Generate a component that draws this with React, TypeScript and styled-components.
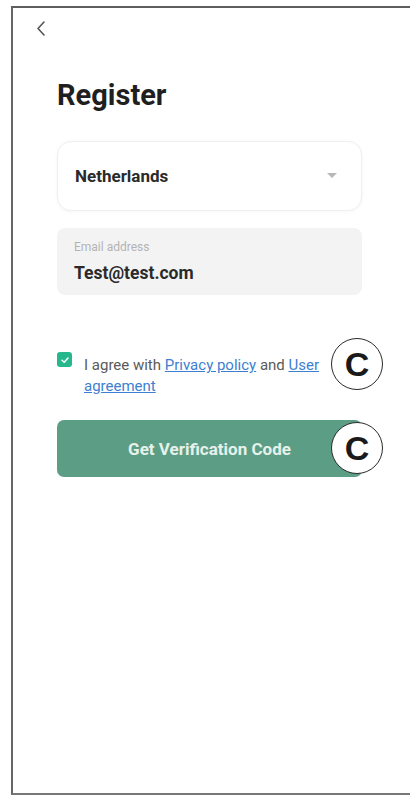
import React from "react"
import styled, { createGlobalStyle } from "styled-components"

const Global = createGlobalStyle`
    html, body {
        margin: 0;
        padding: 0;
        background: #ffffff;
        font-family: Roboto, "Liberation Sans", Arial, sans-serif;
        overflow: hidden;
    }
    * { box-sizing: border-box; }
`

const Frame = styled.div`
    margin: 6px 0 0 11px;
    width: calc(100vw - 11px);
    height: 789px;
    border-top: 2px solid #5e5e5e;
    border-left: 2px solid #666;
    border-bottom: 2px solid #777;
    display: flex;
    flex-direction: column;
`

const TopBar = styled.div`
    height: 40px;
    padding: 12px 0 0 22px;
`

const BackBtn = styled.button`
    background: none;
    border: none;
    padding: 0;
    width: 14px;
    height: 18px;
    cursor: pointer;
    display: flex;
`

const Content = styled.div`
    padding: 0 48px 0 44px;
    display: flex;
    flex-direction: column;
`

const Title = styled.h1`
    margin: 30px 0 0;
    font-size: 29px;
    line-height: 34px;
    font-weight: 700;
    color: #1f1f1f;
`

const SelectCard = styled.div`
    margin-top: 29px;
    height: 70px;
    border-radius: 14px;
    border: 1px solid #efefef;
    box-shadow: 0 1px 4px rgba(0, 0, 0, 0.04);
    background: #fff;
    display: flex;
    align-items: center;
    justify-content: space-between;
    padding: 0 24px 0 17px;

    span {
        font-size: 17px;
        font-weight: 700;
        color: #2a2a2a;
    }
`

const Caret = styled.i`
    width: 0;
    height: 0;
    border-left: 5px solid transparent;
    border-right: 5px solid transparent;
    border-top: 5px solid #b8b8b8;
    margin-top: -2px;
`

const InputBox = styled.div`
    margin-top: 17px;
    height: 67px;
    border-radius: 8px;
    background: #f3f3f3;
    padding: 12px 17px 0;
    display: flex;
    flex-direction: column;

    label {
        font-size: 12px;
        color: #b3b3b3;
        line-height: 14px;
    }

    strong {
        margin-top: 8px;
        font-size: 17.5px;
        font-weight: 700;
        color: #2a2a2a;
        line-height: 22px;
    }
`

const AgreeRow = styled.div`
    position: relative;
    margin-top: 60px;
    display: flex;
    align-items: flex-start;
    gap: 12px;
`

const Check = styled.span`
    flex: none;
    width: 15px;
    height: 15px;
    margin-top: -3px;
    border-radius: 3px;
    background: #26b88c;
    display: flex;
    align-items: center;
    justify-content: center;
`

const AgreeText = styled.p`
    margin: 0;
    width: 250px;
    font-size: 15px;
    line-height: 21px;
    color: #5a5a5a;

    a {
        color: #3d7fd0;
        text-decoration: underline;
    }
`

const Mark = styled.span<{ $top: number }>`
    position: absolute;
    right: -21px;
    top: ${({ $top }) => $top}px;
    width: 52px;
    height: 52px;
    border-radius: 50%;
    border: 1.5px solid #2a2a2a;
    background: #fff;
    display: flex;
    align-items: center;
    justify-content: center;
    font-family: "Liberation Sans", Arial, sans-serif;
    font-size: 34px;
    font-weight: 700;
    color: #1a1a1a;
    line-height: 1;
`

const ButtonRow = styled.div`
    position: relative;
    margin-top: 23px;
`

const SubmitBtn = styled.button`
    width: 100%;
    height: 57px;
    border: none;
    border-radius: 7px;
    background: #5c9e85;
    color: #e6f1eb;
    font-family: Roboto, "Liberation Sans", Arial, sans-serif;
    font-size: 17px;
    font-weight: 700;
    cursor: pointer;
`

export default function App() {
    return (
        <>
            <Global />
            <Frame>
                <TopBar>
                    <BackBtn aria-label="Back">
                        <svg width="12" height="17" viewBox="0 0 12 17">
                            <path d="M9 2 L3 8.5 L9 15" fill="none" stroke="#555" strokeWidth="1.6" strokeLinecap="round" strokeLinejoin="round" />
                        </svg>
                    </BackBtn>
                </TopBar>
                <Content>
                    <Title>Register</Title>
                    <SelectCard>
                        <span>Netherlands</span>
                        <Caret />
                    </SelectCard>
                    <InputBox>
                        <label>Email address</label>
                        <strong>Test@test.com</strong>
                    </InputBox>
                    <AgreeRow>
                        <Check>
                            <svg width="10" height="10" viewBox="0 0 10 10">
                                <path d="M2 5.2 L4.2 7.3 L8 3" fill="none" stroke="#fff" strokeWidth="1.5" strokeLinecap="round" strokeLinejoin="round" />
                            </svg>
                        </Check>
                        <AgreeText>
                            I agree with <a>Privacy policy</a> and <a>User</a> <a>agreement</a>
                        </AgreeText>
                        <Mark $top={-17}>C</Mark>
                    </AgreeRow>
                    <ButtonRow>
                        <SubmitBtn>Get Verification Code</SubmitBtn>
                        <Mark $top={2}>C</Mark>
                    </ButtonRow>
                </Content>
            </Frame>
        </>
    )
}
